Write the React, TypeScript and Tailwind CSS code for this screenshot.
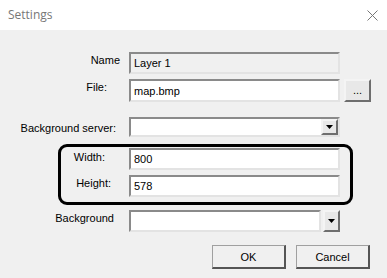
import React from 'react';

const sunken =
  'border-2 border-t-[#8a8a8a] border-l-[#8a8a8a] border-r-[#e3e3e3] border-b-[#e3e3e3]';
const raised =
  'border-2 border-t-[#f4f4f4] border-l-[#f4f4f4] border-r-[#6e6e6e] border-b-[#6e6e6e] bg-[#e8e8e8]';

function TextBox({ value, disabled }: { value?: string; disabled?: boolean }) {
  return (
    <div
      className={`w-[211px] h-[22px] ${sunken} ${disabled ? 'bg-[#f0f0f0]' : 'bg-white'} pl-[3px] flex items-center`}
    >
      {value}
    </div>
  );
}

function Arrow() {
  return (
    <div className={`w-[17px] h-full ${raised} flex items-center justify-center`}>
      <svg width="8" height="5" viewBox="0 0 8 5">
        <path d="M0 0h7l-3.5 4z" fill="#000" />
      </svg>
    </div>
  );
}

function Label({ text, w, pr, pt }: { text: string; w: string; pr: string; pt: string }) {
  return <div className={`${w} ${pr} ${pt} shrink-0 text-right whitespace-nowrap`}>{text}</div>;
}

export default function App() {
  return (
    <div
      className="w-[387px] h-[278px] bg-[#f0f0f0] text-[11px] leading-4 text-black flex flex-col overflow-hidden"
      style={{ fontFamily: '"Liberation Sans", Tahoma, sans-serif' }}
    >
      {/* Title bar */}
      <div className="h-[30px] bg-white flex items-center justify-between pl-2 pr-[9px] shrink-0">
        <span
          className="text-[12px] text-[#777]"
          style={{ fontFamily: '"Open Sans", "Noto Sans", sans-serif' }}
        >
          Settings
        </span>
        <svg width="11" height="11" viewBox="0 0 11 11">
          <path d="M0.5 0.5l10 10M10.5 0.5l-10 10" stroke="#777" strokeWidth="1" />
        </svg>
      </div>

      <div className="flex flex-col pt-[22px]">
        {/* Name */}
        <div className="flex items-start">
          <Label text="Name" w="w-[129px]" pr="pr-[9px]" pt="pt-0" />
          <TextBox value="Layer 1" disabled />
        </div>

        {/* File */}
        <div className="flex items-start mt-[5px]">
          <Label text="File:" w="w-[129px]" pr="pr-[22px]" pt="pt-0" />
          <div className={`w-[211px] h-[23px] ${sunken} bg-white pl-[3px] flex items-center`}>
            map.bmp
          </div>
          <div
            className={`ml-[4px] w-[27px] h-[23px] ${raised} flex items-center justify-center text-[11px] pb-[2px]`}
          >
            ...
          </div>
        </div>

        {/* Background server */}
        <div className="flex items-start mt-[15px]">
          <Label text="Background server:" w="w-[129px]" pr="pr-[13px]" pt="pt-[3px]" />
          <div className={`w-[211px] h-[20px] ${sunken} bg-white flex justify-end`}>
            <Arrow />
          </div>
        </div>

        {/* Width / Height group */}
        <div className="ml-[58px] mt-[7px] w-[295px] h-[61px] border-[3px] border-black rounded-[9px] pt-[1px] flex flex-col">
          <div className="flex items-start">
            <Label text="Width:" w="w-[68px]" pr="pr-[24px]" pt="pt-[1px]" />
            <TextBox value="800" />
          </div>
          <div className="flex items-start mt-[5px]">
            <Label text="Height:" w="w-[68px]" pr="pr-[18px]" pt="pt-0" />
            <TextBox value="578" />
          </div>
        </div>

        {/* Background */}
        <div className="flex items-start mt-[5px]">
          <Label text="Background" w="w-[129px]" pr="pr-[15px]" pt="pt-0" />
          <div className="w-[211px] h-[22px] flex">
            <div className={`w-[192px] h-full ${sunken} bg-white`} />
            <div className="ml-[2px] h-full">
              <Arrow />
            </div>
          </div>
        </div>

        {/* Buttons */}
        <div className="flex mt-[13px] pl-[212px] gap-[10px]">
          <div className="w-[74px] h-[24px] border border-[#a0a0a0] border-r-[#555] border-b-[#555] border-r-2 border-b-2 bg-[#f0f0f0] flex items-center justify-center">
            OK
          </div>
          <div className="w-[74px] h-[24px] border border-[#a0a0a0] border-r-[#555] border-b-[#555] border-r-2 border-b-2 bg-[#f0f0f0] flex items-center justify-center">
            Cancel
          </div>
        </div>
      </div>
    </div>
  );
}
